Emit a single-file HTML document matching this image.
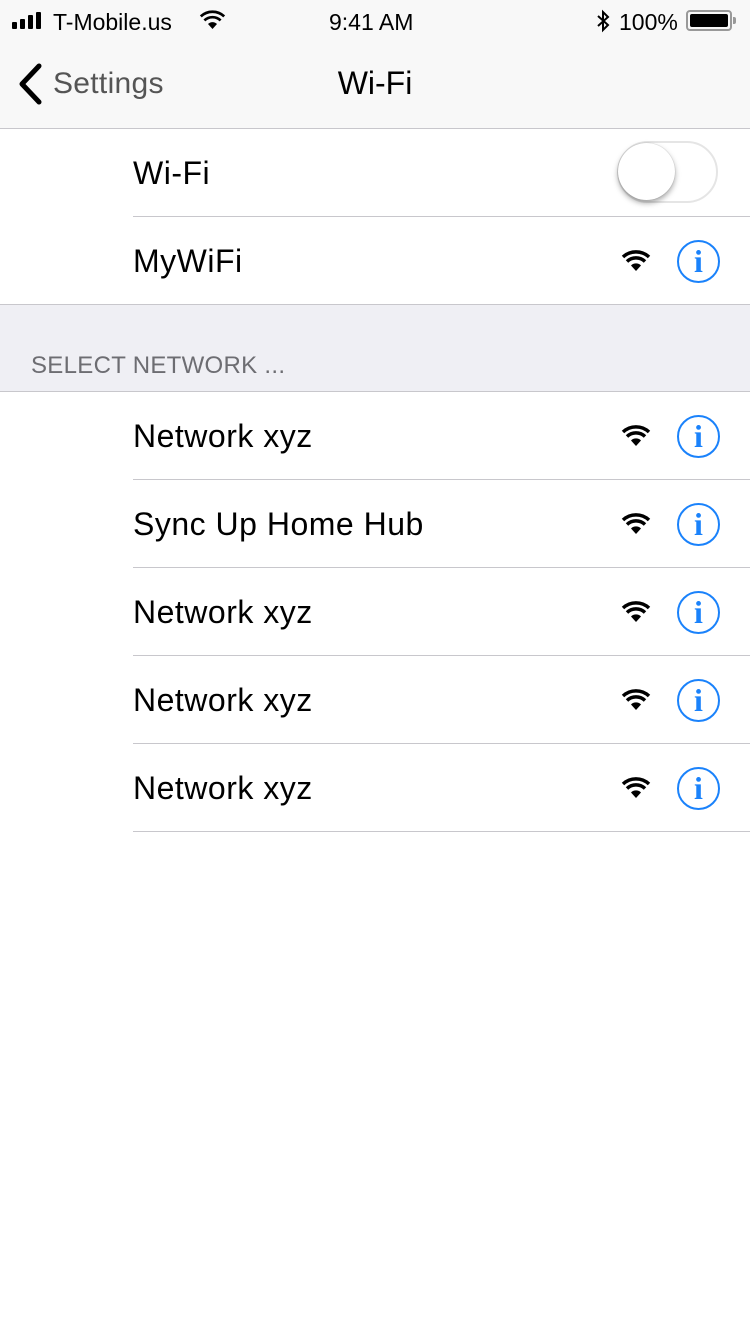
<!DOCTYPE html>
<html><head><meta charset="utf-8"><style>
*{margin:0;padding:0;box-sizing:border-box}
body{width:750px;height:1334px;background:#fff;font-family:"Liberation Sans",sans-serif;position:relative;overflow:hidden}
.hdr{position:absolute;left:0;top:0;width:750px;height:129px;background:#f8f8f8;border-bottom:1px solid #c8c7cc}
.t{position:absolute;white-space:nowrap}
.row{position:absolute;left:0;width:750px;height:88px}
.row .lbl{position:absolute;left:133px;top:26px;font-size:32px;color:#000;letter-spacing:0.5px}
.row .ln{position:absolute;left:133px;right:0;bottom:0;height:1px;background:#c8c7cc}
.wifi{position:absolute;left:621px;top:33px}
.info{position:absolute;left:677px;top:23px;width:43px;height:43px;border:2.5px solid #1a82fb;border-radius:50%;color:#1a82fb;font-family:"Liberation Serif",serif;font-weight:bold;font-size:32px;text-align:center;line-height:38px}
</style></head><body>
<div class="hdr">
<svg class="t" style="left:12px;top:12px" width="36" height="18"><rect x="0" y="10" width="5" height="7" rx="1"/><rect x="8" y="7" width="5" height="10" rx="1"/><rect x="16" y="3" width="5" height="14" rx="1"/><rect x="24" y="0" width="5" height="17" rx="1"/></svg>
<div class="t" style="left:53px;top:9px;font-size:23px">T-Mobile.us</div>
<svg class="t" style="left:199px;top:10px" width="27" height="20" viewBox="0 0 30 22"><path d="M15 21 L10 15.5 A7 7 0 0 1 20 15.5Z" fill="#000"/><path d="M6 11.5 A13 13 0 0 1 24 11.5" stroke="#000" stroke-width="3" fill="none"/><path d="M2 7 A19 19 0 0 1 28 7" stroke="#000" stroke-width="3" fill="none"/></svg>
<div class="t" style="left:329px;top:9px;font-size:23px">9:41 AM</div>
<svg class="t" style="left:595px;top:9px" width="16" height="24" viewBox="0 0 16 24"><path d="M3 7 L13 16 L8 21 L8 3 L13 8 L3 17" stroke="#000" stroke-width="2" fill="none"/></svg>
<div class="t" style="left:619px;top:9px;font-size:23px">100%</div>
<div class="t" style="left:686px;top:10px;width:46px;height:21px;border:2px solid #999;border-radius:4px;padding:2px"><div style="background:#000;width:100%;height:100%;border-radius:2px"></div></div>
<div class="t" style="left:733px;top:17px;width:3px;height:7px;background:#999;border-radius:0 2px 2px 0"></div>
<svg class="t" style="left:16px;top:63px" width="28" height="42"><path d="M23 3 L6 21 L23 39" stroke="#000" stroke-width="5" fill="none" stroke-linecap="round" stroke-linejoin="round"/></svg>
<div class="t" style="left:53px;top:67px;font-size:30px;color:#555;letter-spacing:0.3px">Settings</div>
<div class="t" style="left:0;width:750px;text-align:center;top:65px;font-size:32px">Wi-Fi</div>
</div>
<div class="row" style="top:129px"><div class="lbl">Wi-Fi</div><div class="ln"></div>
<div class="t" style="left:617px;top:12px;width:101px;height:62px;border:2px solid #e5e5e5;border-radius:31px"></div>
<div class="t" style="left:618px;top:14px;width:57px;height:57px;border-radius:50%;background:#fff;box-shadow:0 3px 6px rgba(0,0,0,.35),0 0 1px rgba(0,0,0,.3)"></div>
</div>
<div class="row" style="top:217px"><div class="lbl">MyWiFi</div>
<svg class="wifi" width="30" height="22" viewBox="0 0 30 22"><path d="M15 21 L10 15.5 A7 7 0 0 1 20 15.5Z"/><path d="M6 11.5 A13 13 0 0 1 24 11.5" stroke="#000" stroke-width="3.5" fill="none"/><path d="M2 7 A19 19 0 0 1 28 7" stroke="#000" stroke-width="3.5" fill="none"/></svg>
<div class="info">i</div></div>
<div style="position:absolute;left:0;top:304px;width:750px;height:88px;background:#efeff4;border-top:1px solid #c8c7cc;border-bottom:1px solid #c8c7cc">
<div class="t" style="left:31px;top:47px;font-size:24px;color:#6d6d72;letter-spacing:0.3px">SELECT NETWORK ...</div></div>
<div class="row" style="top:392px"><div class="lbl">Network xyz</div><div class="ln"></div><svg class="wifi" width="30" height="22" viewBox="0 0 30 22"><path d="M15 21 L10 15.5 A7 7 0 0 1 20 15.5Z"/><path d="M6 11.5 A13 13 0 0 1 24 11.5" stroke="#000" stroke-width="3.5" fill="none"/><path d="M2 7 A19 19 0 0 1 28 7" stroke="#000" stroke-width="3.5" fill="none"/></svg><div class="info">i</div></div>
<div class="row" style="top:480px"><div class="lbl">Sync Up Home Hub</div><div class="ln"></div><svg class="wifi" width="30" height="22" viewBox="0 0 30 22"><path d="M15 21 L10 15.5 A7 7 0 0 1 20 15.5Z"/><path d="M6 11.5 A13 13 0 0 1 24 11.5" stroke="#000" stroke-width="3.5" fill="none"/><path d="M2 7 A19 19 0 0 1 28 7" stroke="#000" stroke-width="3.5" fill="none"/></svg><div class="info">i</div></div>
<div class="row" style="top:568px"><div class="lbl">Network xyz</div><div class="ln"></div><svg class="wifi" width="30" height="22" viewBox="0 0 30 22"><path d="M15 21 L10 15.5 A7 7 0 0 1 20 15.5Z"/><path d="M6 11.5 A13 13 0 0 1 24 11.5" stroke="#000" stroke-width="3.5" fill="none"/><path d="M2 7 A19 19 0 0 1 28 7" stroke="#000" stroke-width="3.5" fill="none"/></svg><div class="info">i</div></div>
<div class="row" style="top:656px"><div class="lbl">Network xyz</div><div class="ln"></div><svg class="wifi" width="30" height="22" viewBox="0 0 30 22"><path d="M15 21 L10 15.5 A7 7 0 0 1 20 15.5Z"/><path d="M6 11.5 A13 13 0 0 1 24 11.5" stroke="#000" stroke-width="3.5" fill="none"/><path d="M2 7 A19 19 0 0 1 28 7" stroke="#000" stroke-width="3.5" fill="none"/></svg><div class="info">i</div></div>
<div class="row" style="top:744px"><div class="lbl">Network xyz</div><div class="ln"></div><svg class="wifi" width="30" height="22" viewBox="0 0 30 22"><path d="M15 21 L10 15.5 A7 7 0 0 1 20 15.5Z"/><path d="M6 11.5 A13 13 0 0 1 24 11.5" stroke="#000" stroke-width="3.5" fill="none"/><path d="M2 7 A19 19 0 0 1 28 7" stroke="#000" stroke-width="3.5" fill="none"/></svg><div class="info">i</div></div>
</body></html>
